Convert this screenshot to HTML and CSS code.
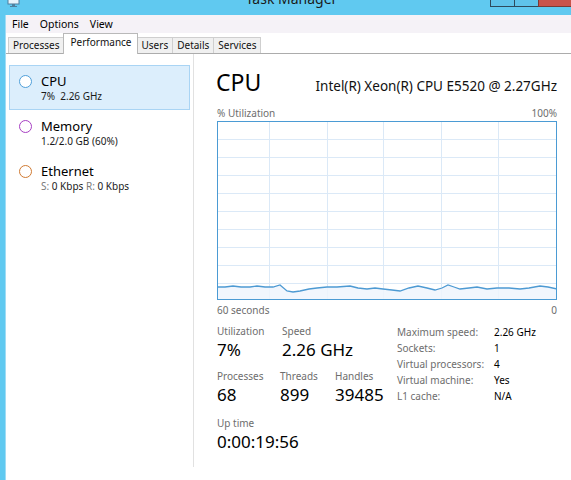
FILE: index.html
```html
<!DOCTYPE html>
<html>
<head>
<meta charset="utf-8">
<link rel="stylesheet" href="styles.css">
</head>
<body>
<div class="window">
  <div class="titlebar">
    <div class="tb-left">
      <svg class="app-icon" width="14" height="8" viewBox="0 0 14 8"><rect x="1" y="-4" width="11" height="8" fill="#e8f4fb" stroke="#4d7f9e" stroke-width="1"/><rect x="5" y="4" width="3" height="2" fill="#4d7f9e"/><rect x="3" y="6" width="7" height="1" fill="#4d7f9e"/></svg>
    </div>
    <div class="tb-title">Task Manager</div>
    <div class="tb-controls">
      <span class="ctl"></span><span class="ctl"></span><span class="ctl close"></span>
    </div>
  </div>
  <div class="client">
    <div class="menubar">
      <span class="menu">File</span><span class="menu">Options</span><span class="menu">View</span>
    </div>
    <div class="tabs">
      <div class="tab">Processes</div>
      <div class="tab active">Performance</div>
      <div class="tab">Users</div>
      <div class="tab">Details</div>
      <div class="tab">Services</div>
    </div>
    <div class="main">
      <div class="sidebar">
        <div class="item selected">
          <span class="ring ring-cpu"></span>
          <div class="item-text">
            <div class="item-name">CPU</div>
            <div class="item-sub">7%&nbsp; 2.26 GHz</div>
          </div>
        </div>
        <div class="item">
          <span class="ring ring-mem"></span>
          <div class="item-text">
            <div class="item-name">Memory</div>
            <div class="item-sub">1.2/2.0 GB (60%)</div>
          </div>
        </div>
        <div class="item">
          <span class="ring ring-eth"></span>
          <div class="item-text">
            <div class="item-name">Ethernet</div>
            <div class="item-sub"><span class="dim">S:</span> 0 Kbps <span class="dim">R:</span> 0 Kbps</div>
          </div>
        </div>
      </div>
      <div class="pane">
        <div class="header">
          <div class="big-title">CPU</div>
          <div class="proc-name">Intel(R) Xeon(R) CPU E5520 @ 2.27GHz</div>
        </div>
        <div class="axis-row"><span>% Utilization</span><span>100%</span></div>
        <div class="graph">
          <svg width="340" height="179" viewBox="0 0 340 179" preserveAspectRatio="none">
            <g stroke="#dbe9f7" stroke-width="1">
              <line x1="52.5" y1="0" x2="52.5" y2="179"/>
              <line x1="110.5" y1="0" x2="110.5" y2="179"/>
              <line x1="166.5" y1="0" x2="166.5" y2="179"/>
              <line x1="224.5" y1="0" x2="224.5" y2="179"/>
              <line x1="281.5" y1="0" x2="281.5" y2="179"/>
              <line x1="0" y1="18.5" x2="340" y2="18.5"/>
              <line x1="0" y1="36.5" x2="340" y2="36.5"/>
              <line x1="0" y1="54.5" x2="340" y2="54.5"/>
              <line x1="0" y1="72.5" x2="340" y2="72.5"/>
              <line x1="0" y1="90.5" x2="340" y2="90.5"/>
              <line x1="0" y1="108.5" x2="340" y2="108.5"/>
              <line x1="0" y1="126.5" x2="340" y2="126.5"/>
              <line x1="0" y1="144.5" x2="340" y2="144.5"/>
              <line x1="0" y1="162.5" x2="340" y2="162.5"/>
            </g>
            <polygon fill="#eef4fd" fill-opacity="0.85" points="0,179 0,166 8,166 16,165 24,166 33,166 40,165 48,166 56,166 63,164 70,170 76,171 83,170 92,168 100,167 110,166 120,166 133,165 141,167 150,168 158,167 166,168 175,169 183,170 192,167 201,165 210,167 218,169 225,167 231,164 237,166 243,168 252,167 260,166 270,168 280,167 292,167 303,168 312,167 323,165 331,166 340,168 340,179"/>
            <polyline fill="none" stroke="#4d9ad3" stroke-width="1.3" points="0,166 8,166 16,165 24,166 33,166 40,165 48,166 56,166 63,164 70,170 76,171 83,170 92,168 100,167 110,166 120,166 133,165 141,167 150,168 158,167 166,168 175,169 183,170 192,167 201,165 210,167 218,169 225,167 231,164 237,166 243,168 252,167 260,166 270,168 280,167 292,167 303,168 312,167 323,165 331,166 340,168"/>
          </svg>
        </div>
        <div class="axis-row axis-bottom"><span>60 seconds</span><span>0</span></div>
        <div class="stats">
          <div class="stats-left">
            <div class="stat-row">
              <div class="stat w-util"><div class="stat-label">Utilization</div><div class="stat-value">7%</div></div>
              <div class="stat"><div class="stat-label">Speed</div><div class="stat-value">2.26 GHz</div></div>
            </div>
            <div class="stat-row">
              <div class="stat w-proc"><div class="stat-label">Processes</div><div class="stat-value">68</div></div>
              <div class="stat w-thr"><div class="stat-label">Threads</div><div class="stat-value">899</div></div>
              <div class="stat"><div class="stat-label">Handles</div><div class="stat-value">39485</div></div>
            </div>
            <div class="stat-row uptime">
              <div class="stat"><div class="stat-label">Up time</div><div class="stat-value">0:00:19:56</div></div>
            </div>
          </div>
          <div class="info">
            <span class="info-label">Maximum speed:</span><span class="info-value">2.26 GHz</span>
            <span class="info-label">Sockets:</span><span class="info-value">1</span>
            <span class="info-label">Virtual processors:</span><span class="info-value">4</span>
            <span class="info-label">Virtual machine:</span><span class="info-value">Yes</span>
            <span class="info-label">L1 cache:</span><span class="info-value">N/A</span>
          </div>
        </div>
      </div>
    </div>
  </div>
</div>
</body>
</html>
```

FILE: styles.css
```css
* { box-sizing: border-box; }
html, body {
  margin: 0;
  padding: 0;
  width: 571px;
  height: 480px;
  overflow: hidden;
  background: #ffffff;
  font-family: "Noto Sans", "Open Sans", sans-serif;
  color: #000;
}
.window {
  width: 571px;
  height: 480px;
  display: flex;
  flex-direction: column;
  background: #60c9f0;
}
.titlebar {
  height: 15px;
  display: grid;
  grid-template-columns: 1fr auto 1fr;
  align-items: start;
  overflow: hidden;
}
.tb-left { padding-left: 7px; }
.app-icon { display: block; }
.tb-title {
  font-size: 14px;
  line-height: 14px;
  margin-top: -8px;
  padding-left: 12px;
  color: #1a1a1a;
  white-space: nowrap;
}
.tb-controls {
  justify-self: end;
  display: flex;
}
.ctl {
  display: block;
  width: 24px;
  height: 7px;
  border: 1px solid #2e4a5c;
  border-top: none;
  border-right: none;
  background: #5fc3ea;
}
.ctl.close {
  width: 33px;
  background: #c9534b;
  border-color: #7a3a34;
}
.client {
  flex: 1;
  margin-left: 5px;
  display: flex;
  flex-direction: column;
  background: #ffffff;
  border-left: 1px solid #9fdcf5;
}
.menubar {
  height: 18px;
  background: #f5f2f7;
  display: flex;
  align-items: center;
  padding-left: 6px;
  font-size: 10.5px;
}
.menu { margin-right: 11px; }
.tabs {
  height: 21px;
  display: flex;
  align-items: flex-end;
  padding-left: 2px;
  border-bottom: 1px solid #acacac;
  font-size: 10px;
}
.tab {
  height: 16px;
  line-height: 15px;
  padding: 0 4px;
  background: #f0f0f0;
  border: 1px solid #cfcfcf;
  border-bottom: none;
  margin-right: -1px;
  color: #111;
}
.tab.active {
  height: 21px;
  line-height: 17px;
  background: #ffffff;
  border-color: #b9b9b9;
  padding: 0 5px 0 6px;
  margin-bottom: -1px;
  position: relative;
  z-index: 1;
  font-size: 10px;
}
.main {
  flex: 1;
  display: flex;
  min-height: 0;
}
.sidebar {
  width: 188px;
  height: 413px;
  border-right: 1px solid #e1e1e1;
  padding: 11px 3px 0 3px;
  display: flex;
  flex-direction: column;
}
.item {
  height: 45px;
  display: flex;
  align-items: flex-start;
  padding: 6px 0 0 9px;
  border: 1px solid transparent;
}
.item.selected {
  background: #dceefc;
  border-color: #a9d4f4;
}
.ring {
  width: 13px;
  height: 13px;
  border-radius: 50%;
  border: 1.3px solid #4f9fd9;
  margin-top: 3px;
  margin-right: 9px;
  flex: none;
  background: #fff;
}
.ring-cpu { border-color: #4f9fd9; }
.ring-mem { border-color: #a73fc3; }
.ring-eth { border-color: #d07a32; }
.item-name {
  font-size: 13px;
  line-height: 18px;
}
.item-sub {
  font-size: 10px;
  line-height: 13px;
  color: #1a1a1a;
}
.dim { color: #7a7a7a; }
.pane {
  flex: 1;
  padding: 13px 14px 0 22px;
  display: flex;
  flex-direction: column;
}
.header {
  display: flex;
  justify-content: space-between;
  align-items: baseline;
  line-height: 30px;
}
.big-title { font-size: 23px; }
.proc-name { font-size: 13.5px; color: #111; }
.axis-row {
  display: flex;
  justify-content: space-between;
  font-size: 10px;
  line-height: 14px;
  color: #6d6d6d;
  margin-top: 5px;
  padding-left: 1px;
}
.axis-bottom { margin-top: 3px; }
.graph {
  margin-top: 1px;
  margin-left: 1px;
  width: 340px;
  height: 179px;
  border: 1px solid #4b9bd4;
  overflow: hidden;
}
.graph svg { display: block; margin: -1px 0 0 -1px; }
.stats {
  display: flex;
  align-items: flex-start;
  margin-top: 7px;
  padding-left: 1px;
}
.stats-left {
  width: 180px;
  display: flex;
  flex-direction: column;
  gap: 7px;
}
.stat-row { display: flex; }
.uptime { margin-top: 2px; }
.w-util { width: 65px; }
.w-proc { width: 63px; }
.w-thr { width: 55px; }
.stat-label {
  font-size: 10px;
  line-height: 14px;
  color: #6d6d6d;
}
.stat-value {
  font-size: 17px;
  line-height: 24px;
  color: #000;
}
.info {
  display: grid;
  grid-template-columns: 97px auto;
  align-content: start;
  font-size: 10px;
  line-height: 16px;
}
.info-label { color: #6d6d6d; }
.info-value { color: #000; }
```
